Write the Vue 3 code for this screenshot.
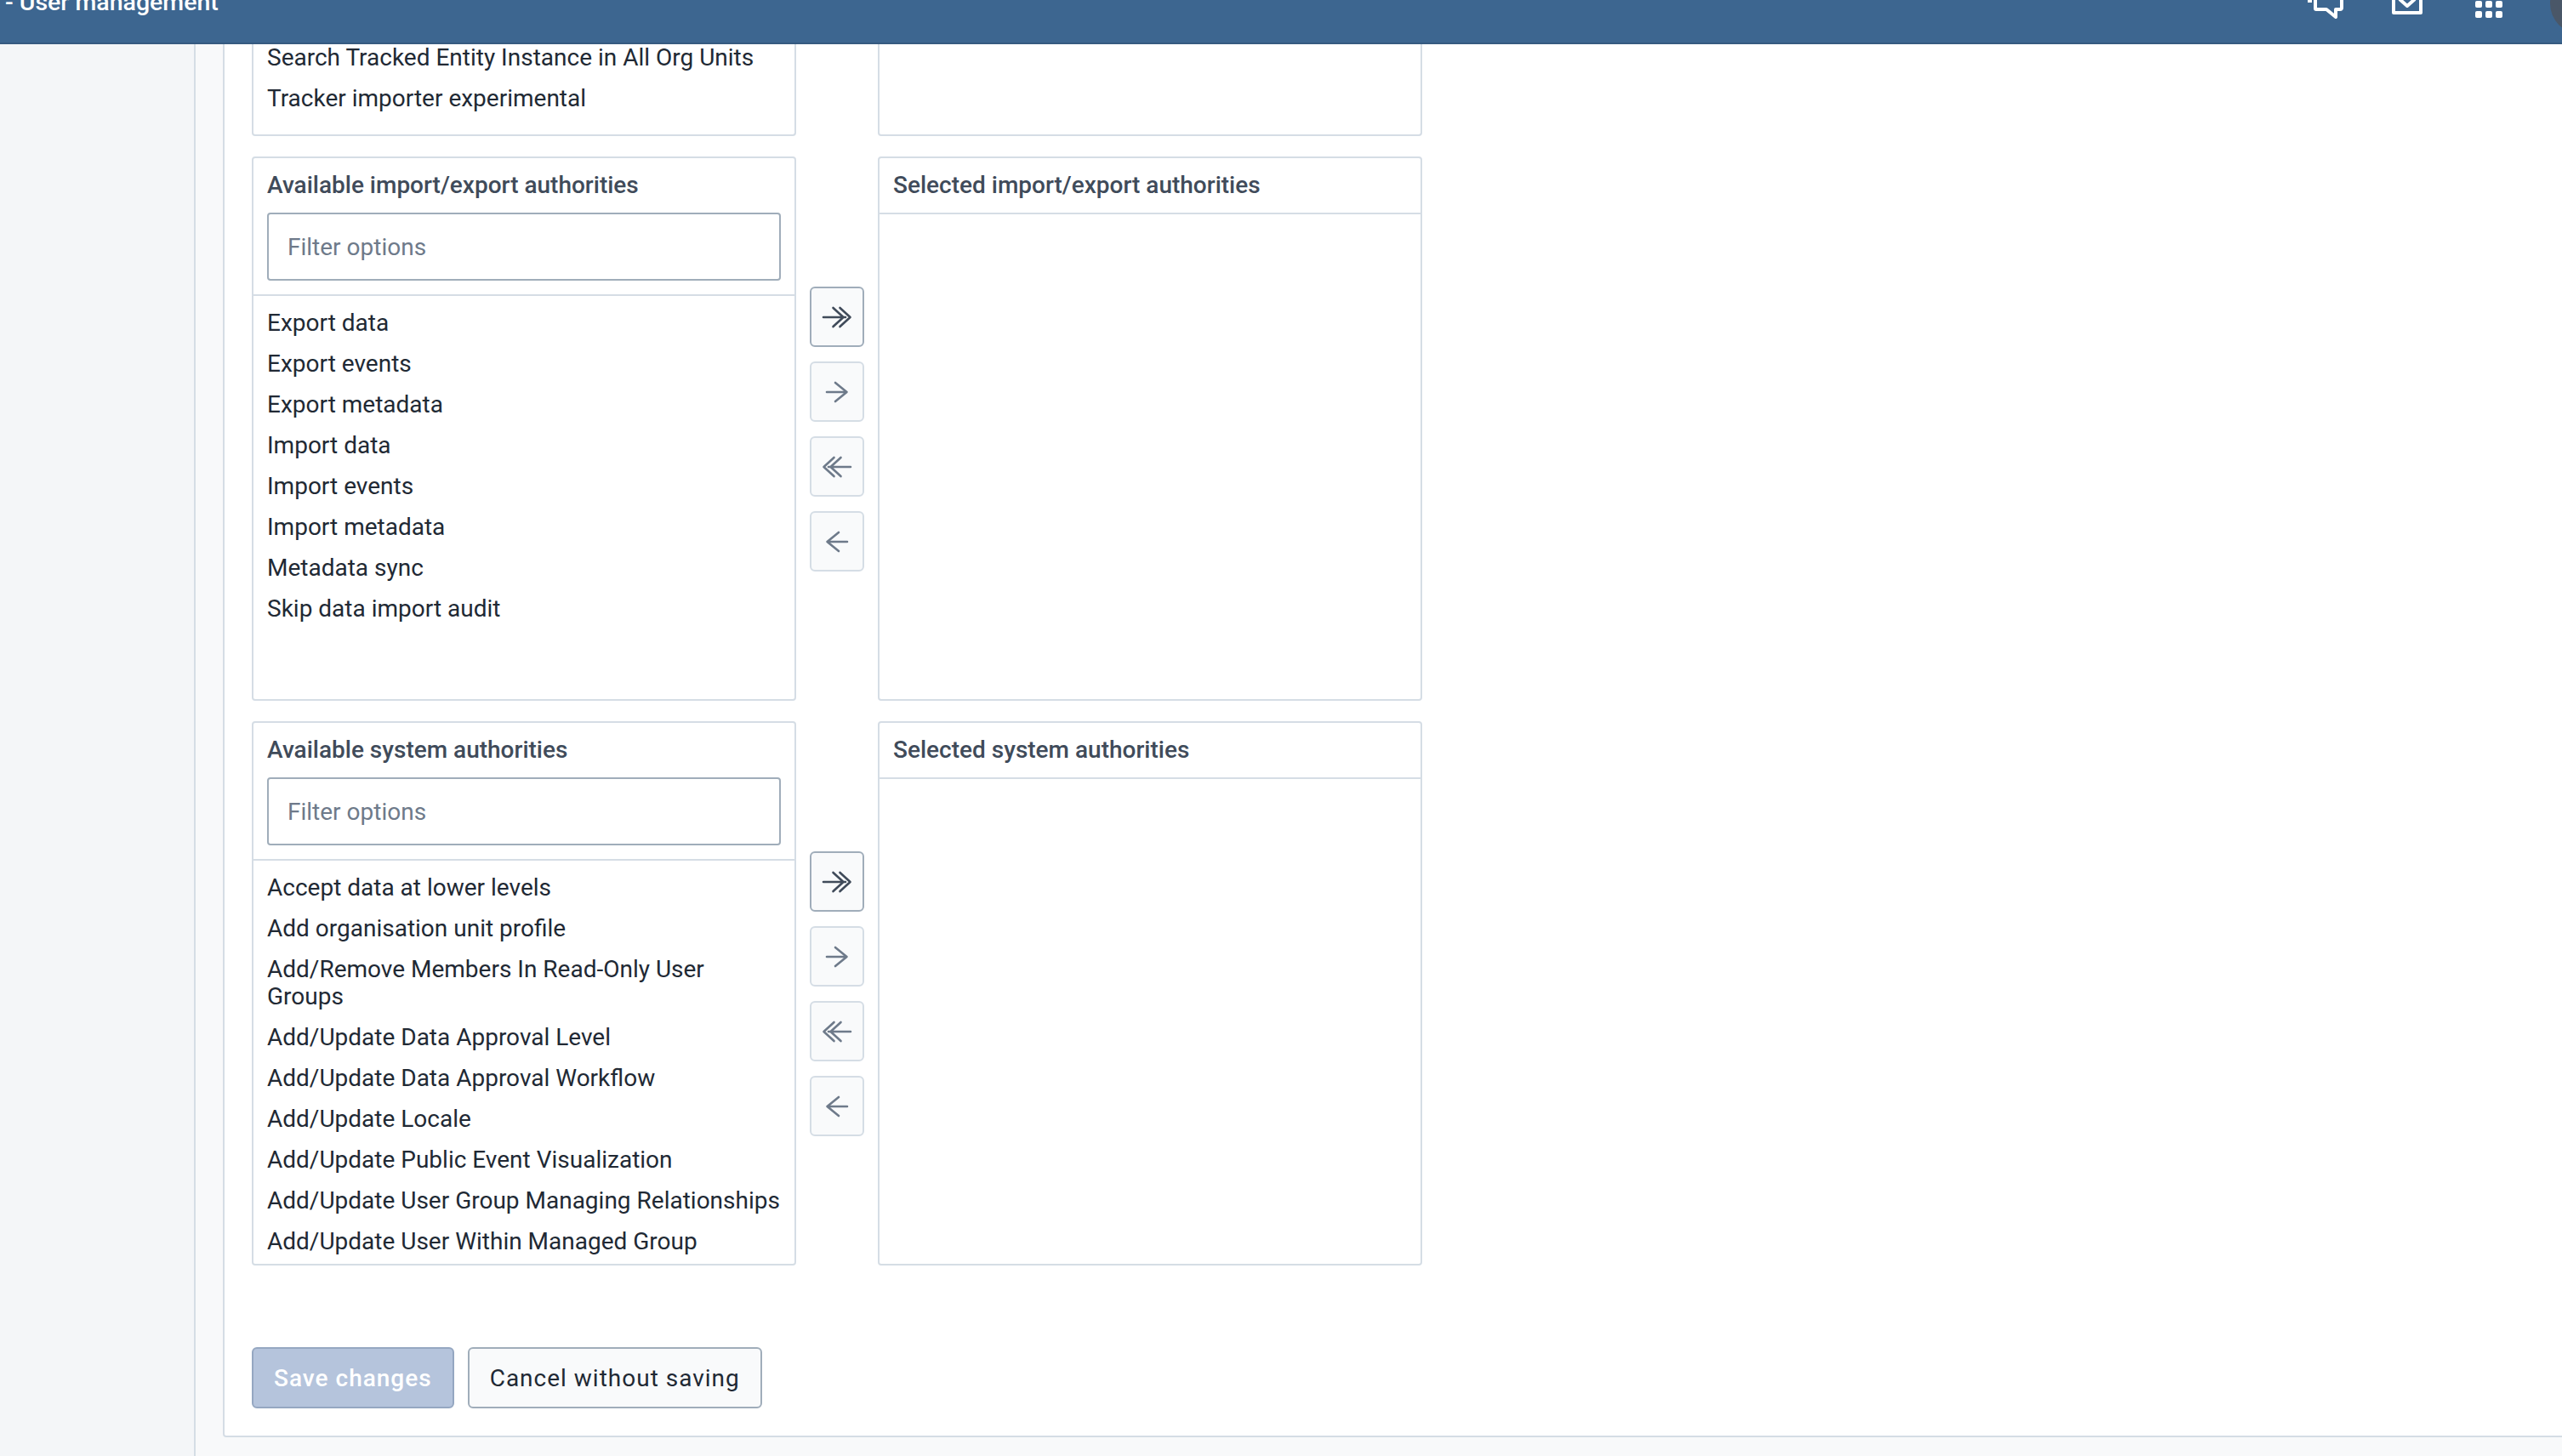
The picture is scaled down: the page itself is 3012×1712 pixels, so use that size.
<script setup>
const arrows = [
  { d: 'M4 20h26M15.500 9l12 11-12 11M23.500 9l12 11-12 11', active: true },
  { d: 'M8 20h23M18 9l13.500 11L18 31', active: false },
  { d: 'M36 20H10M24.500 9l-12 11 12 11M16.500 9l-12 11 12 11', active: false },
  { d: 'M32 20H9M22 9L8.500 20 22 31', active: false },
]
const groups = [
  {
    available: 'Available import/export authorities',
    selected: 'Selected import/export authorities',
    items: ['Export data', 'Export events', 'Export metadata', 'Import data', 'Import events', 'Import metadata', 'Metadata sync', 'Skip data import audit'],
  },
  {
    available: 'Available system authorities',
    selected: 'Selected system authorities',
    items: ['Accept data at lower levels', 'Add organisation unit profile', 'Add/Remove Members In Read-Only User Groups', 'Add/Update Data Approval Level', 'Add/Update Data Approval Workflow', 'Add/Update Locale', 'Add/Update Public Event Visualization', 'Add/Update User Group Managing Relationships', 'Add/Update User Within Managed Group'],
  },
]
</script>

<template>
  <div class="page">
    <header class="topbar">
      <span class="app-title">- User management</span>
      <div class="top-icons">
        <svg class="ic-chat" width="42" height="26" viewBox="0 0 42 26" fill="none" stroke="#fff" stroke-width="4" stroke-linejoin="round"><path d="M9-8V10q0 1 1 1H22L33 20V11H38q2 0 2-2V-8" /><path d="M0 1h5" /></svg>
        <svg class="ic-mail" width="36" height="18" viewBox="0 0 36 18" fill="none" stroke="#fff" stroke-width="4" stroke-linejoin="round"><path d="M2-8v23h32V-8M9-1l9 8 9-8" /></svg>
        <div class="ic-apps"><i v-for="n in 6" :key="n"></i></div>
      </div>
      <div class="avatar"></div>
    </header>
    <div class="body">
      <aside class="sidebar"></aside>
      <main class="main">
        <section class="card">
          <div class="group group-clipped">
            <div class="panel">
              <ul class="list list-top">
                <li>Search Tracked Entity Instance in All Org Units</li>
                <li>Tracker importer experimental</li>
              </ul>
            </div>
            <div class="mid"></div>
            <div class="panel"></div>
          </div>
          <div v-for="g in groups" :key="g.available" class="group">
            <div class="panel">
              <div class="panel-head">
                <div class="panel-title">{{ g.available }}</div>
                <input class="filter" type="text" placeholder="Filter options" />
              </div>
              <ul class="list">
                <li v-for="it in g.items" :key="it">{{ it }}</li>
              </ul>
            </div>
            <div class="mid">
              <button v-for="(a, i) in arrows" :key="i" class="arrow" :class="{ on: a.active }">
                <svg width="40" height="40" viewBox="0 0 40 40" fill="none" stroke="currentColor" stroke-width="2.6" stroke-linecap="round" stroke-linejoin="round"><path :d="a.d" /></svg>
              </button>
            </div>
            <div class="panel">
              <div class="panel-head panel-head-selected">
                <div class="panel-title">{{ g.selected }}</div>
              </div>
            </div>
          </div>
          <div class="actions">
            <button class="btn primary">Save changes</button>
            <button class="btn">Cancel without saving</button>
          </div>
        </section>
      </main>
    </div>
  </div>
</template>

<style>
html, body { margin: 0; padding: 0; background: #f8f9fa; }
</style>

<style scoped>
.page {
  width: 3012px;
  height: 1712px;
  overflow: hidden;
  display: flex;
  flex-direction: column;
  font-family: Roboto, "Liberation Sans", sans-serif;
  color: #212934;
}
.topbar {
  flex: none;
  height: 52px;
  box-sizing: border-box;
  background: #3d6690;
  border-bottom: 2px solid #365a80;
  position: relative;
  overflow: hidden;
  z-index: 2;
  color: #fff;
}
.app-title {
  position: absolute;
  left: 6px;
  top: -13px;
  font-size: 28.500px;
  line-height: 32px;
  font-weight: 500;
}
.top-icons { position: absolute; inset: 0; }
.ic-chat { position: absolute; left: 2713px; top: 0; }
.ic-mail { position: absolute; left: 2812px; top: 0; }
.ic-apps {
  position: absolute;
  left: 2910px;
  top: 1px;
  display: grid;
  grid-template-columns: repeat(3, 8px);
  grid-auto-rows: 8px;
  gap: 4px;
}
.ic-apps i { background: #fff; border-radius: 2px; }
.avatar {
  position: absolute;
  left: 2998px;
  top: -32px;
  width: 72px;
  height: 72px;
  border-radius: 50%;
  background: #4a5768;
}
.body { flex: 1; min-height: 0; display: flex; overflow: hidden; }
.sidebar {
  flex: none;
  width: 228px;
  background: #f4f6f8;
  border-right: 2px solid #d5dde5;
}
.main { flex: 1; min-width: 0; padding: 0 0 0 32px; overflow: hidden; }
.card {
  box-sizing: border-box;
  width: 2800px;
  height: 1638px;
  background: #fff;
  border: 2px solid #d5dde5;
  border-top: 0;
  border-radius: 0 0 4px 4px;
  padding: 0 32px;
}
.group {
  display: flex;
  margin-bottom: 24px;
}
.group:nth-of-type(2) { height: 640px; }
.group:nth-of-type(3) { height: 640px; margin-bottom: 0; }
.group-clipped { height: 108px; }
.panel {
  box-sizing: border-box;
  width: 640px;
  display: flex;
  flex-direction: column;
  background: #fff;
  border: 2px solid #d5dde5;
  border-radius: 4px;
  overflow: hidden;
}
.group-clipped .panel { border-top: 0; border-radius: 0 0 4px 4px; }
.panel-head { box-sizing: border-box; height: 162px; padding: 0 16px; border-bottom: 2px solid #d5dde5; }
.panel-head-selected { height: 66px; }
.panel-title {
  font-size: 28px;
  font-weight: 500;
  line-height: 32px;
  color: #404b5a;
  padding-top: 16px;
  height: 64px;
  box-sizing: border-box;
}
.filter {
  display: block;
  box-sizing: border-box;
  width: 604px;
  height: 80px;
  padding: 0 22px;
  margin: 0;
  border: 2px solid #a0adba;
  border-radius: 4px;
  background: #fff;
  font: 400 28px Roboto, sans-serif;
  color: #212934;
  outline: none;
}
.filter::placeholder { color: #6e7a8a; opacity: 1; }
.list {
  list-style: none;
  margin: 0;
  padding: 8px 16px;
  font-size: 28px;
  line-height: 32px;
  color: #212934;
  flex: 1;
  overflow: hidden;
}
.list li { padding: 8px 0; }
.list-top { padding-top: 0; margin-top: -8px; }
.mid {
  flex: none;
  width: 96px;
  display: flex;
  flex-direction: column;
  align-items: center;
  padding-top: 153px;
  gap: 17px;
}
.group-clipped .mid { padding: 0; }
.arrow {
  flex: none;
  box-sizing: border-box;
  width: 64px;
  height: 71px;
  padding: 0;
  display: flex;
  align-items: center;
  justify-content: center;
  background: #f9fafb;
  border: 2px solid #d5dde5;
  border-radius: 6px;
  color: #6e7a8a;
}
.arrow.on { border-color: #a0adba; color: #404b5a; }
.actions { display: flex; gap: 16px; margin-top: 96px; }
.btn {
  box-sizing: border-box;
  height: 72px;
  padding: 0 24px;
  background: #f9fafb;
  border: 2px solid #a0adba;
  border-radius: 6px;
  font: 400 28px Roboto, sans-serif;
  letter-spacing: 1px;
  color: #212934;
}
.btn.primary {
  background: #b5c4dc;
  border-color: #95a7c1;
  color: #fff;
  font-weight: 500;
}
</style>
